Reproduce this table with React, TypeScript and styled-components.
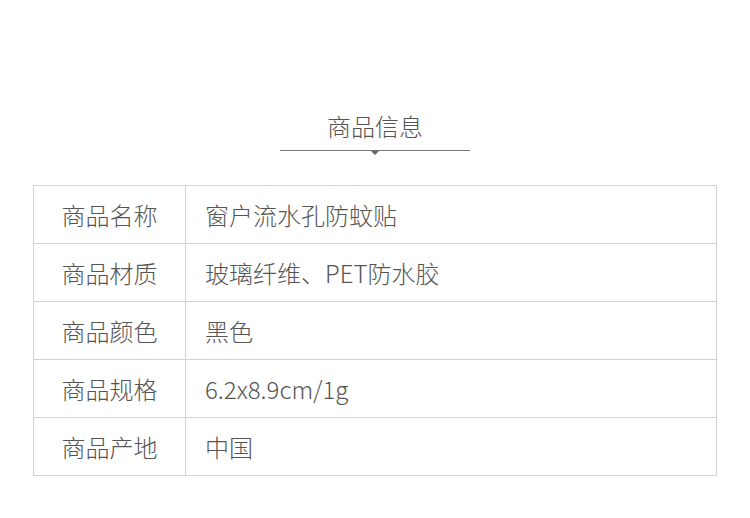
import React from "react";
import styled, { createGlobalStyle } from "styled-components";

const Global = createGlobalStyle`
  html, body { margin: 0; padding: 0; background: #fff; }
  body { font-family: "Noto Sans CJK SC", "Noto Sans", sans-serif; }
`;

const Page = styled.div`
  width: 750px;
  height: 518px;
  box-sizing: border-box;
  padding-top: 110px;
  display: flex;
  flex-direction: column;
  align-items: center;
`;

const Heading = styled.div`
  width: 190px;
  display: flex;
  flex-direction: column;
  align-items: center;
`;

const Title = styled.div`
  font-size: 24px;
  line-height: 32px;
  color: #555;
  font-weight: 300;
`;

const Rule = styled.div`
  position: relative;
  margin-top: 8px;
  width: 100%;
  height: 1px;
  background: #777;
  &::after {
    content: "";
    position: absolute;
    left: 50%;
    top: 1px;
    transform: translateX(-50%);
    border-left: 4px solid transparent;
    border-right: 4px solid transparent;
    border-top: 4px solid #666;
  }
`;

const Table = styled.div`
  margin-top: 34px;
  width: 684px;
  box-sizing: border-box;
  border: 1px solid #d2d2d2;
  display: flex;
  flex-direction: column;
`;

const Row = styled.div<{ $last?: boolean }>`
  display: grid;
  grid-template-columns: 152px 1fr;
  box-sizing: border-box;
  border-bottom: ${(p) => (p.$last ? "none" : "1px solid #d2d2d2")};
  height: ${(p) => (p.$last ? "57px" : "58px")};
`;

const Label = styled.div`
  border-right: 1px solid #d2d2d2;
  display: flex;
  align-items: center;
  justify-content: center;
  padding-bottom: 1px;
  font-size: 24px;
  color: #555;
  font-weight: 300;
`;

const Value = styled.div`
  display: flex;
  align-items: center;
  padding-left: 19px;
  padding-bottom: 1px;
  font-size: 24px;
  color: #555;
  font-weight: 300;
`;

const rows: [string, string][] = [
  ["商品名称", "窗户流水孔防蚊贴"],
  ["商品材质", "玻璃纤维、PET防水胶"],
  ["商品颜色", "黑色"],
  ["商品规格", "6.2x8.9cm/1g"],
  ["商品产地", "中国"],
];

export default function App() {
  return (
    <>
      <Global />
      <Page>
        <Heading>
          <Title>商品信息</Title>
          <Rule />
        </Heading>
        <Table>
          {rows.map(([k, v], i) => (
            <Row key={k} $last={i === rows.length - 1}>
              <Label>{k}</Label>
              <Value>{v}</Value>
            </Row>
          ))}
        </Table>
      </Page>
    </>
  );
}
